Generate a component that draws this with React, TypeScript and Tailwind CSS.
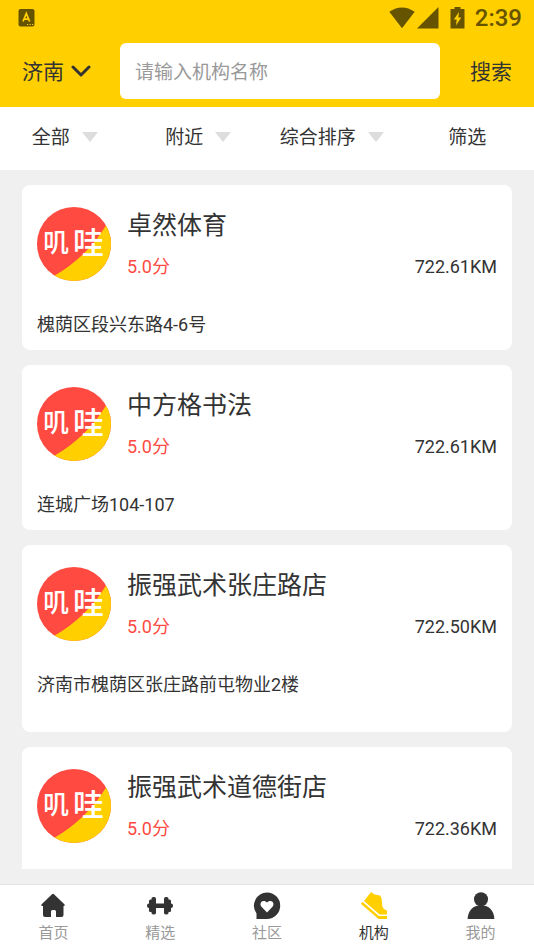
import React from 'react'
import clsx from 'clsx'

interface Org {
  name: string
  score: string
  distance: string
  address: string
  twoLines?: boolean
}

const orgs: Org[] = [
  {
    name: '卓然体育',
    score: '5.0分',
    distance: '722.61KM',
    address: '槐荫区段兴东路4-6号',
  },
  {
    name: '中方格书法',
    score: '5.0分',
    distance: '722.61KM',
    address: '连城广场104-107',
  },
  {
    name: '振强武术张庄路店',
    score: '5.0分',
    distance: '722.50KM',
    address: '济南市槐荫区张庄路前屯物业2楼',
    twoLines: true,
  },
  {
    name: '振强武术道德街店',
    score: '5.0分',
    distance: '722.36KM',
    address: '',
  },
]

const filters = [
  { label: '全部', arrow: true },
  { label: '附近', arrow: true },
  { label: '综合排序', arrow: true },
  { label: '筛选', arrow: false },
]

const HomeIcon = () => (
  <svg viewBox="0 0 28 28" className="size-7" fill="#333">
    <path d="M13 2.3q1-.9 2 0L25.6 12.4q.8 1.4-.8 1.6H24.500V23q0 2-2 2H17v-5.500q0-1.500-1.500-1.500h-2q-1.500 0-1.500 1.500V25H6q-2 0-2-2v-9H3.200q-1.600-.2-.8-1.600z" />
  </svg>
)

const DumbbellIcon = () => (
  <svg viewBox="0 0 28 28" className="size-7" fill="#333">
    <rect x="1" y="11.500" width="26" height="4.500" rx="2" />
    <rect x="3" y="7.500" width="4" height="12.500" rx="1.500" />
    <rect x="5.500" y="5" width="4.500" height="17.500" rx="1.800" />
    <rect x="21" y="7.500" width="4" height="12.500" rx="1.500" />
    <rect x="18" y="5" width="4.500" height="17.500" rx="1.800" />
  </svg>
)

const CommunityIcon = () => (
  <svg viewBox="0 0 28 28" className="size-7">
    <path
      d="M14 .5a13.200 13.200 0 1 1 0 26.400H3.500v-5.500A13.200 13.200 0 0 1 14 .5z"
      fill="#333"
    />
    <path
      d="M14 20.500 8.500 14.800C6.500 12.400 7.800 9 10.600 9c1.500 0 2.600.6 3.400 1.500.8-.9 1.900-1.500 3.400-1.500 2.800 0 4.100 3.400 2.100 5.800z"
      fill="#fff"
    />
  </svg>
)

const ShoeIcon = () => (
  <svg viewBox="0 0 28 28" className="size-7" fill="#ffcf00">
    <path d="M11 0Q14 3 20 3.500L21.500 6Q22 9 22.200 13.500 22.600 17 27 18.500V22.500H19.500L4 9z" />
    <path d="M2.700 10 18.800 24H27V27H18.500L.8 11.800z" />
  </svg>
)

const MineIcon = () => (
  <svg viewBox="0 0 28 28" className="size-7" fill="#333">
    <circle cx="14" cy="7.200" r="7" />
    <path d="M.6 27C1 18.500 6 13.300 14 13.300S27 18.500 27.400 27z" />
  </svg>
)

const tabs = [
  { label: '首页', icon: <HomeIcon /> },
  { label: '精选', icon: <DumbbellIcon /> },
  { label: '社区', icon: <CommunityIcon /> },
  { label: '机构', icon: <ShoeIcon />, active: true },
  { label: '我的', icon: <MineIcon /> },
]

const StatusBar = () => (
  <div className="flex h-9 items-center pl-[18px] pr-3 text-[#665300]">
    <svg viewBox="0 0 17 18" className="h-[18px] w-[17px]">
      <rect x=".5" width="16" height="17.500" rx="2" fill="currentColor" />
      <path
        d="M5 12.500 8.300 4.500 11.600 12.500M6.200 10.200h4.200"
        fill="none"
        stroke="#ffcf00"
        strokeWidth="1.800"
      />
      <path
        d="M9 15.500h1.200M11.500 15.500h1.200M14 15.500h1.200"
        stroke="#ffcf00"
        strokeWidth="1"
      />
    </svg>
    <div className="ml-auto flex items-center">
      <svg viewBox="0 0 26 22" className="h-[22px] w-[26px]" fill="currentColor">
        <path d="M.3 4.800Q13-4 25.700 4.800L13 21.200z" />
      </svg>
      <svg viewBox="0 0 22 22" className="ml-0.5 size-[22px]" fill="currentColor">
        <path d="M21.500 0v21.500H0z" />
      </svg>
      <svg viewBox="0 0 15 22" className="ml-[11px] h-[22px] w-[15px]">
        <path
          d="M4.500 0h6v2H14q.5 0 .5.500V21q0 .5-.5.500H1Q.5 21.500.5 21V2.500Q.5 2 1 2h3.500z"
          fill="currentColor"
        />
        <path d="M9 5 3.800 12.500H6.700L6 18.500l5.200-8H8.300z" fill="#ffcf00" />
      </svg>
      <span className="ml-2.5 text-2xl font-medium">2:39</span>
    </div>
  </div>
)

const Logo = () => (
  <svg
    viewBox="0 0 74 74"
    className="size-[74px] shrink-0 rounded-full font-medium"
    fill="#fff"
  >
    <rect width="74" height="74" fill="#ff4a42" />
    <path d="M17 69Q50 50 70 17L74 14V74H14z" fill="#ffcf00" />
    <text x="6" y="45" fontSize="26">
      叽
    </text>
    <text x="36" y="47" fontSize="31">
      哇
    </text>
  </svg>
)

const OrgCard = ({ org }: { org: Org }) => (
  <li className="shrink-0 rounded-lg bg-white px-[15px] pb-[13px] pt-[22px]">
    <div className="flex">
      <Logo />
      <div className="ml-4 min-w-0 flex-1">
        <h2 className="truncate text-[25px] leading-[38px]">{org.name}</h2>
        <div className="mt-2.5 flex justify-between text-lg leading-6">
          <span className="text-[#ff4a42]">{org.score}</span>
          <span>{org.distance}</span>
        </div>
      </div>
    </div>
    <p
      className={clsx(
        'mt-8 text-lg leading-6',
        org.twoLines ? 'min-h-[46px]' : 'min-h-6'
      )}
    >
      {org.address}
    </p>
  </li>
)

export default function App() {
  return (
    <div className="flex h-screen flex-col bg-[#f0f0f0] font-[Roboto,'Noto_Sans_CJK_SC',sans-serif] text-[#333]">
      <header className="bg-[#ffcf00]">
        <StatusBar />
        <form
          className="flex items-center px-[22px] pb-2 pt-[7px]"
          onSubmit={(e) => e.preventDefault()}
        >
          <button
            type="button"
            className="flex w-[98px] shrink-0 items-center gap-[7px] text-[21px]"
          >
            <span className="pt-[3px]">济南</span>
            <svg viewBox="0 0 20 14" className="h-3.5 w-5">
              <path
                d="M2 3l8 8 8-8"
                fill="none"
                stroke="#333"
                strokeWidth="3"
                strokeLinecap="round"
                strokeLinejoin="round"
              />
            </svg>
          </button>
          <input
            type="text"
            aria-label="机构名称"
            placeholder="请输入机构名称"
            className="h-14 min-w-0 flex-1 rounded-md bg-white px-[15px] pt-0.5 text-[19px] outline-none placeholder:text-[#999]"
          />
          <button
            type="submit"
            className="w-[72px] shrink-0 pt-[3px] text-right text-[21px]"
          >
            搜索
          </button>
        </form>
      </header>

      <div className="grid grid-cols-4 bg-white">
        {filters.map((item) => (
          <button
            key={item.label}
            type="button"
            className="flex h-[63px] items-center justify-center whitespace-nowrap text-[19px]"
          >
            {item.label}
            {item.arrow ? (
              <svg
                viewBox="0 0 16 10"
                className="mb-1 ml-3 mr-1 h-2.5 w-4"
                fill="#ddd"
              >
                <path d="M0 0h16L8 10z" />
              </svg>
            ) : null}
          </button>
        ))}
      </div>

      <main className="mb-[15px] min-h-0 flex-1 overflow-hidden px-[22px] pt-[15px]">
        <ul className="flex flex-col gap-[15px]">
          {orgs.map((org) => (
            <OrgCard key={org.name} org={org} />
          ))}
        </ul>
      </main>

      <nav className="grid grid-cols-5 border-t border-[#e5e5e5] bg-white">
        {tabs.map((tab) => (
          <a
            key={tab.label}
            href="#"
            className={clsx(
              'flex flex-col items-center gap-[3px] pb-[7px] pt-[7px] text-[15px] leading-5',
              tab.active ? 'text-[#333]' : 'text-[#999]'
            )}
          >
            {tab.icon}
            {tab.label}
          </a>
        ))}
      </nav>
    </div>
  )
}
